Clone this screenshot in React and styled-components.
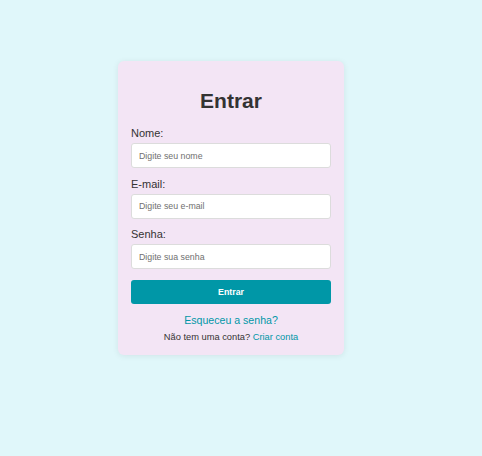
import React from "react";
import styled, { createGlobalStyle } from "styled-components";

const Global = createGlobalStyle`
  html, body { margin: 0; padding: 0; }
  body {
    background: #e0f7fa;
    font-family: "Liberation Sans", Arial, sans-serif;
    color: #333;
  }
  * { box-sizing: border-box; }
`;

const Page = styled.div`
  min-height: 456px;
  padding: 61px 0 0 118px;
`;

const Card = styled.form`
  width: 226px;
  background: #f3e5f5;
  border-radius: 6px;
  box-shadow: 0 1px 6px rgba(0, 0, 0, 0.08);
  padding: 26px 13px 12.5px;
  display: flex;
  flex-direction: column;
`;

const Title = styled.h2`
  margin: 0 0 12px;
  font-size: 21px;
  line-height: 28px;
  font-weight: 700;
  text-align: center;
  color: #333;
`;

const Field = styled.div`
  display: flex;
  flex-direction: column;
  gap: 3px;
  margin-bottom: 9.5px;
`;

const Label = styled.label`
  font-size: 11px;
  line-height: 13px;
  color: #333;
`;

const Input = styled.input`
  height: 25px;
  width: 100%;
  border: 1px solid #dcdcdc;
  border-radius: 3px;
  background: #fff;
  padding: 0 7px;
  font-family: "Liberation Sans", Arial, sans-serif;
  font-size: 8.8px;
  color: #333;
  outline: none;
  &::placeholder { color: #6f6f6f; }
`;

const Button = styled.button`
  margin-top: 1px;
  height: 24px;
  border: none;
  border-radius: 3px;
  background: #0097a7;
  color: #fff;
  font-family: "Liberation Sans", Arial, sans-serif;
  font-weight: 700;
  font-size: 8.8px;
  cursor: pointer;
`;

const Links = styled.div`
  display: flex;
  flex-direction: column;
  align-items: center;
  margin-top: 10px;
  gap: 4px;
`;

const Forgot = styled.a`
  font-size: 10.6px;
  line-height: 13px;
  color: #0097a7;
  text-decoration: none;
`;

const Small = styled.p`
  margin: 0;
  font-size: 9.3px;
  line-height: 12px;
  color: #333;
`;

const Link = styled.a`
  color: #0097a7;
  text-decoration: none;
`;

export default function App() {
  return (
    <>
      <Global />
      <Page>
        <Card onSubmit={(e) => e.preventDefault()}>
          <Title>Entrar</Title>
          <Field>
            <Label htmlFor="nome">Nome:</Label>
            <Input id="nome" placeholder="Digite seu nome" />
          </Field>
          <Field>
            <Label htmlFor="email">E-mail:</Label>
            <Input id="email" placeholder="Digite seu e-mail" />
          </Field>
          <Field>
            <Label htmlFor="senha">Senha:</Label>
            <Input id="senha" type="password" placeholder="Digite sua senha" />
          </Field>
          <Button type="submit">Entrar</Button>
          <Links>
            <Forgot href="#">Esqueceu a senha?</Forgot>
            <Small>
              Não tem uma conta? <Link href="#">Criar conta</Link>
            </Small>
          </Links>
        </Card>
      </Page>
    </>
  );
}
